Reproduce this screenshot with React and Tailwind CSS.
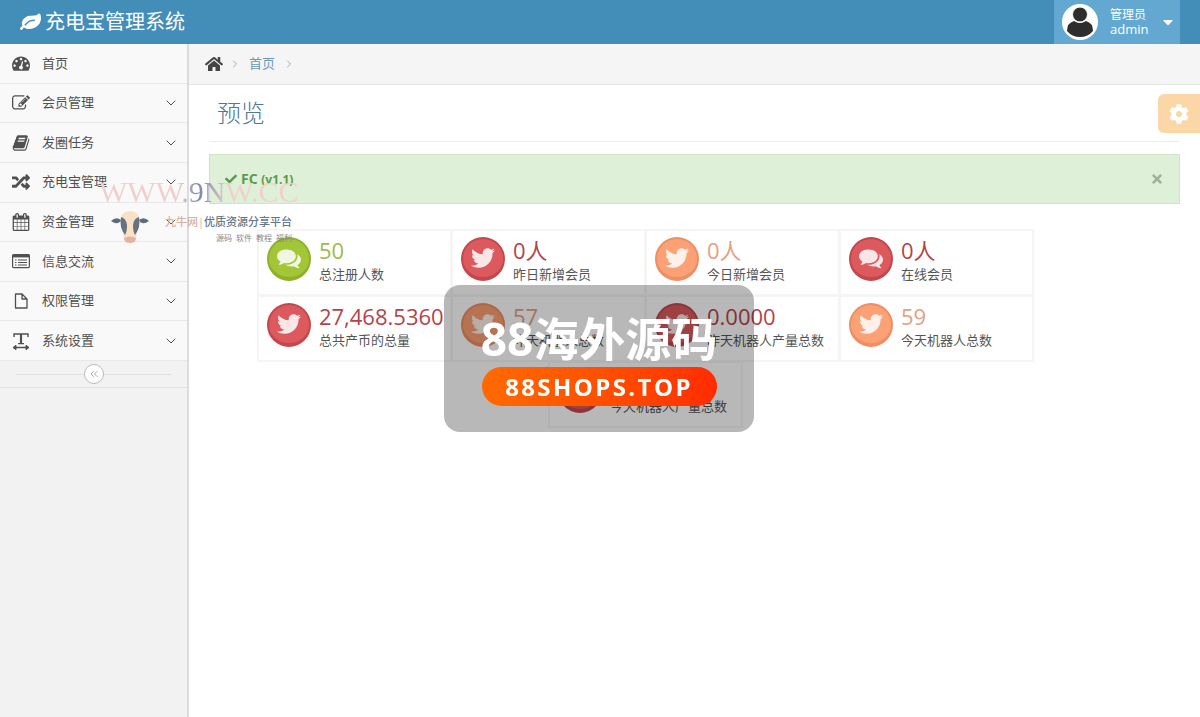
import { FaHome, FaRandom, FaCog, FaCheck, FaTimes, FaTwitter, FaCaretDown } from 'react-icons/fa';
import { ChevronDown, ChevronRight, ChevronsLeft } from 'lucide-react';

function Glyph({ d, className }) {
  return (
    <svg viewBox="0 0 1792 1792" fill="currentColor" className={className} aria-hidden="true">
      <path d={d} />
    </svg>
  );
}

const paths = {
  leaf: 'M1280 704q0-26-19-45t-45-19q-172 0-318 49.5t-259.5 134-235.5 219.5q-19 21-19 45 0 26 19 45t45 19q24 0 45-19 27-24 74-71t67-66q137-124 268.5-176t313.5-52q26 0 45-19t19-45zm512-198q0 95-20 193-46 224-184.5 383t-357.5 268q-214 108-438 108-148 0-286-47-15-5-88-42t-96-37q-16 0-39.5 32t-45 70-52.5 70-60 32q-43 0-63.5-17.5t-45.5-59.5q-2-4-6-11t-5.5-10-3-9.5-1.500-13.500q0-35 31-73.5t68-65.5 68-56 31-48q0-4-14-38t-16-44q-9-51-9-104 0-115 43.5-220t119-184.5 170.5-139 204-95.5q55-18 145-25.5t179.500-9 178.500-6 163.500-24 113.500-56.500l29.500-29.500 29.500-28 27-20 36.500-16 43.500-4.500q39 0 70.500 46t47.500 112 24 124 8 96z',
  dashboard: 'M384 1152q0-53-37.5-90.5t-90.5-37.5-90.5 37.5-37.5 90.5 37.5 90.5 90.5 37.5 90.5-37.5 37.5-90.5zm192-448q0-53-37.5-90.5t-90.5-37.5-90.5 37.5-37.5 90.5 37.5 90.5 90.5 37.5 90.5-37.5 37.5-90.5zm428 481l101-382q6-26-7.5-48.5t-38.5-29.5-48 6.5-30 39.5l-101 382q-60 5-107 43.5t-63 98.5q-20 77 20 146t117 89 146-20 89-117q16-60-6-117t-72-91zm660-33q0-53-37.5-90.5t-90.5-37.5-90.5 37.5-37.5 90.5 37.5 90.5 90.5 37.5 90.5-37.5 37.5-90.5zm-640-640q0-53-37.5-90.5t-90.5-37.5-90.5 37.5-37.5 90.5 37.5 90.5 90.5 37.5 90.5-37.5 37.5-90.5zm448 192q0-53-37.5-90.5t-90.5-37.5-90.5 37.5-37.5 90.5 37.5 90.5 90.5 37.5 90.5-37.5 37.5-90.5zm320 448q0 261-141 483-19 29-54 29h-1402q-35 0-54-29-141-221-141-483 0-182 71-348t191-286 286-191 348-71 348 71 286 191 191 286 71 348z',
  edit: 'M888 1184l116-116-152-152-116 116v56h96v96h56zm440-720q-16-16-33 1l-350 350q-17 17-1 33t33-1l350-350q17-17 1-33zm80 594v190q0 119-84.5 203.5t-203.5 84.5h-832q-119 0-203.5-84.5t-84.5-203.5v-832q0-119 84.5-203.5t203.5-84.5h832q63 0 117 25 15 7 18 23 3 17-9 29l-49 49q-14 14-32 8-23-6-45-6h-832q-66 0-113 47t-47 113v832q0 66 47 113t113 47h832q66 0 113-47t47-113v-126q0-13 9-22l64-64q15-15 35-7t20 29zm-96-738l288 288-672 672h-288v-288zm444 132l-92 92-288-288 92-92q28-28 68-28t68 28l152 152q28 28 28 68t-28 68z',
  book: 'M1703 478q40 57 18 129l-275 906q-19 64-76.5 107.5t-122.5 43.5h-923q-77 0-148.5-53.5t-99.5-131.5q-24-67-2-127 0-4 3-27t4-37q1-8-3-21.5t-3-19.5q2-11 8-21t16.5-23.5 16.5-23.5q23-38 45-91.5t30-91.5q3-10 .5-30t-.5-28q3-11 17-28t17-23q21-36 42-92t25-90q1-9-2.5-32t.5-28q4-13 22-30.5t22-22.5q19-26 42.5-84.5t27.5-96.5q1-8-3-25.5t-2-26.5q2-8 9-18t18-23 17-21q8-12 16.5-30.5t15-35 16-36 19.5-32 26.5-23.5 36-11.5 47.5 5.5l-1 3q38-9 51-9h761q74 0 114 56t18 130l-274 906q-36 119-71.5 153.5t-128.5 34.5h-869q-27 0-38 15-11 16-1 43 24 70 144 70h923q29 0 56-15.5t35-41.5l300-987q7-22 5-57 38 15 59 43zm-1064 2q-4 13 2 22.5t20 9.5h608q13 0 25.5-9.5t16.5-22.5l21-64q4-13-2-22.5t-20-9.5h-608q-13 0-25.5 9.5t-16.5 22.5zm-83 256q-4 13 2 22.5t20 9.5h608q13 0 25.5-9.5t16.5-22.5l21-64q4-13-2-22.5t-20-9.5h-608q-13 0-25.5 9.5t-16.5 22.5z',
  calendar: 'M192 1664h288v-288h-288v288zm352 0h320v-288h-320v288zm-352-352h288v-320h-288v320zm352 0h320v-320h-320v320zm-352-384h288v-288h-288v288zm736 736h320v-288h-320v288zm-384-736h320v-288h-320v288zm768 736h288v-288h-288v288zm-384-352h320v-320h-320v320zm-352-864v-288q0-13-9.5-22.5t-22.5-9.5h-64q-13 0-22.5 9.5t-9.5 22.5v288q0 13 9.5 22.5t22.5 9.5h64q13 0 22.5-9.5t9.5-22.5zm736 864h288v-320h-288v320zm-384-384h320v-288h-320v288zm384 0h288v-288h-288v288zm32-480v-288q0-13-9.5-22.5t-22.5-9.5h-64q-13 0-22.5 9.5t-9.5 22.5v288q0 13 9.5 22.5t22.5 9.5h64q13 0 22.5-9.5t9.5-22.5zm384-64v1280q0 52-38 90t-90 38h-1408q-52 0-90-38t-38-90v-1280q0-52 38-90t90-38h128v-96q0-66 47-113t113-47h64q66 0 113 47t47 113v96h384v-96q0-66 47-113t113-47h64q66 0 113 47t47 113v96h128q52 0 90 38t38 90z',
  comments: 'M1408 768q0 139-94 257t-256.5 186.5-353.5 68.5q-86 0-176-16-124 88-278 128-36 9-86 16h-3q-11 0-20.5-8t-11.5-21q-1-3-1-6.5t.5-6.5 2-6l2.5-5 3.5-5.5 4-5 4.5-5 4-4.5q5-6 23-25t26-29.5 22.5-29 25-38.5 20.5-44q-124-72-195-177t-71-224q0-139 94-257t256.5-186.5 353.5-68.5 353.5 68.5 256.5 186.5 94 257zm384 256q0 120-71 224.5t-195 176.5q10 24 20.5 44t25 38.5 22.5 29 26 29.5 23 25q1 1 4 4.5t4.5 5 4 5 3.5 5.5l2.5 5 2 6 .5 6.5-1 6.5q-3 14-13 22t-22 7q-50-7-86-16-154-40-278-128-90 16-176 16-271 0-472-132 58 4 88 4 161 0 309-45t264-129q125-92 192-212t67-254q0-77-23-152 129 71 204 178t75 230z',
};

const LeafIcon = (props) => <Glyph d={paths.leaf} {...props} />;
const DashboardIcon = (props) => <Glyph d={paths.dashboard} {...props} />;
const EditIcon = (props) => <Glyph d={paths.edit} {...props} />;
const BookIcon = (props) => <Glyph d={paths.book} {...props} />;
const CalendarIcon = (props) => <Glyph d={paths.calendar} {...props} />;
const CommentsIcon = (props) => <Glyph d={paths.comments} {...props} />;

function ListIcon({ className }) {
  return (
    <svg viewBox="0 0 18 18" fill="none" stroke="currentColor" className={className} aria-hidden="true">
      <rect x="0.6" y="2.6" width="16.8" height="13" rx="1" strokeWidth="1.2" />
      <path d="M1 4h16" strokeWidth="2.8" />
      <path d="M3 8h1.500M3 10.500h1.500M3 13h1.500M6 8h9M6 10.500h9M6 13h9" />
    </svg>
  );
}

function FileIcon({ className }) {
  return (
    <svg viewBox="0 0 18 18" fill="none" stroke="currentColor" strokeWidth="1.3" strokeLinejoin="round" className={className} aria-hidden="true">
      <path d="M3.500 2h6.500l5 5v9H3.500zM10 2v5h5" />
    </svg>
  );
}

function TextWidthIcon({ className }) {
  return (
    <svg viewBox="0 0 18 18" fill="none" stroke="currentColor" className={className} aria-hidden="true">
      <path d="M2 5V2h14v3" strokeWidth="1.4" />
      <path d="M9 2v9.500" strokeWidth="2.200" />
      <path d="M6 11.700h6M3 15.500h12" strokeWidth="1.300" />
      <path d="M4 13.300L1 15.500l3 2.200zM14 13.300l3 2.200-3 2.200z" fill="currentColor" />
    </svg>
  );
}

function CowIcon({ className }) {
  return (
    <svg viewBox="0 0 38 34" className={className} aria-hidden="true">
      <path d="M10 8q0-6 9-7 9 1 9 7l-3 20H13z" fill="#f9e1c8" />
      <path d="M0 11q5-5 10-1-3 6-10 1zM38 11q-5-5-10-1 3 6 10 1z" fill="#5d6b7c" />
      <path d="M10 7q5 1 6 8 0 7-2 10-6-8-4-18zM28 7q-5 1-6 8 0 7 2 10 6-8 4-18z" fill="#66727f" />
      <path d="M13 28q6-3 12 0 0 5-6 5t-6-5z" fill="#e8b19f" />
    </svg>
  );
}

const menu = [
  { label: '首页', icon: DashboardIcon },
  { label: '会员管理', icon: EditIcon, sub: true },
  { label: '发圈任务', icon: BookIcon, sub: true },
  { label: '充电宝管理', icon: FaRandom, sub: true },
  { label: '资金管理', icon: CalendarIcon, sub: true },
  { label: '信息交流', icon: ListIcon, sub: true },
  { label: '权限管理', icon: FileIcon, sub: true },
  { label: '系统设置', icon: TextWidthIcon, sub: true },
];

const tones = {
  green: { circle: 'bg-[#a3c637] border-[#8fb02c]', text: 'text-[#9dba4a]' },
  red: { circle: 'bg-[#dc5a5e] border-[#c2484d]', text: 'text-[#b4444a]' },
  orange: { circle: 'bg-[#fca075] border-[#ec8f64]', text: 'text-[#e2a184]' },
};

const stats = [
  { value: '50', label: '总注册人数', tone: 'green', icon: CommentsIcon },
  { value: '0人', label: '昨日新增会员', tone: 'red', icon: FaTwitter },
  { value: '0人', label: '今日新增会员', tone: 'orange', icon: FaTwitter },
  { value: '0人', label: '在线会员', tone: 'red', icon: CommentsIcon },
  { value: '27,468.5360', label: '总共产币的总量', tone: 'red', icon: FaTwitter },
  { value: '57', label: '昨天机器人总数', tone: 'orange', icon: FaTwitter },
  { value: '0.0000', label: '昨天机器人产量总数', tone: 'red', icon: FaTwitter },
  { value: '59', label: '今天机器人总数', tone: 'orange', icon: FaTwitter },
  { value: '0.0000', label: '今天机器人产量总数', tone: 'red', icon: FaTwitter },
];

function Header() {
  return (
    <header className="flex h-[44px] items-stretch justify-between bg-[#438eb9] pr-5 text-white">
      <a href="#" className="flex items-center gap-1 pl-5 text-xl">
        <LeafIcon className="size-[21px]" />
        充电宝管理系统
      </a>
      <button className="flex w-[126px] items-center gap-3 bg-[#62a8d1] pl-2 text-left">
        <svg viewBox="0 0 36 36" className="size-9 shrink-0" aria-hidden="true">
          <circle cx="18" cy="18" r="18" fill="#fff" />
          <path d="M5 27q0-8 7-10 6 4 12 0 7 2 7 10-5 6-13 6T5 27z" fill="#2d2d2d" />
          <circle cx="18" cy="10.500" r="7.500" fill="#2d2d2d" stroke="#fff" />
        </svg>
        <span className="text-[13px] leading-[15px]">
          <small className="block text-xs leading-[15px]">管理员</small>
          admin
        </span>
        <FaCaretDown className="size-4 shrink-0" />
      </button>
    </header>
  );
}

function Sidebar() {
  return (
    <aside className="w-[189px] shrink-0 border-r-2 border-[#dcdcdc] bg-[#f2f2f2]">
      <nav className="grid h-[317px] grid-rows-8">
        {menu.map(({ label, icon: Icon, sub }) => (
          <a
            key={label}
            href="#"
            className="flex items-center border-b border-[#e8e8e8] bg-[#f9f9f9] px-3 text-[13px] text-[#505050]"
          >
            <Icon className="mr-3 size-[18px] shrink-0" />
            <span className="flex-1">{label}</span>
            {sub && <ChevronDown strokeWidth={1.5} className="size-4 -mr-1" />}
          </a>
        ))}
      </nav>
      <div className="flex h-[27px] items-center border-b border-[#e0e0e0] px-4">
        <span className="h-px flex-1 bg-[#e0e0e0]" />
        <button
          aria-label="收起菜单"
          className="flex size-5 items-center justify-center rounded-full border border-[#bbb] bg-white text-[#aaa]"
        >
          <ChevronsLeft className="size-3" />
        </button>
        <span className="h-px flex-1 bg-[#e0e0e0]" />
      </div>
    </aside>
  );
}

function StatBox({ value, label, tone, icon: Icon }) {
  return (
    <div className="-mt-px -ml-px flex h-[67px] w-[195px] gap-2 border-2 border-[#f5f5f5] pt-[6px] pl-2">
      <span
        className={`flex size-11 shrink-0 items-center justify-center rounded-full border-2 border-b-4 text-white/85 ${tones[tone].circle}`}
      >
        <Icon className="size-6" />
      </span>
      <div className="whitespace-nowrap">
        <div className={`text-[22px] leading-[26px] ${tones[tone].text}`}>{value}</div>
        <div className="text-[13px] leading-[22px] text-[#555]">{label}</div>
      </div>
    </div>
  );
}

function SiteMark() {
  return (
    <div className="pointer-events-none absolute top-[174px] left-[99px]">
      <div className="h-9 bg-linear-to-r from-[#efcfcf] from-40% via-[#7d86ad] via-50% to-[#f0d0cc] to-65% bg-clip-text font-['Liberation_Serif',serif] text-[30px] leading-9 text-transparent">
        WWW.9NW.CC
      </div>
      <div className="flex pl-3">
        <CowIcon className="h-[34px] w-[38px]" />
        <div className="flex flex-col items-end pl-4 whitespace-nowrap">
          <p className="text-[11px] leading-[24px] font-medium text-[#66788a]">
            <span className="text-[#d8b0a0]">九牛网|</span>优质资源分享平台
          </p>
          <p className="flex gap-1 text-[8px] leading-[8px] text-[#888]">
            <span>源码</span>
            <span>软件</span>
            <span>教程</span>
            <span>福利</span>
          </p>
        </div>
      </div>
    </div>
  );
}

function ShopMark() {
  return (
    <div className="pointer-events-none fixed inset-0 flex items-center justify-center pr-[2px]">
      <div className="flex h-[147px] w-[310px] flex-col items-center rounded-2xl bg-black/28 pt-6 text-white">
        <div className="flex h-[58px] items-center text-[46px] leading-[58px] font-bold">
          88海外源码
        </div>
        <div className="flex h-[39px] w-[235px] items-center justify-center rounded-full bg-linear-to-r from-[#ff6a00] to-[#ff2a00] text-2xl font-bold tracking-widest">
          88SHOPS.TOP
        </div>
      </div>
    </div>
  );
}

export default function App() {
  return (
    <div className="relative flex min-h-screen flex-col overflow-x-hidden bg-white font-['Open_Sans','Noto_Sans_CJK_SC',sans-serif]">
      <Header />
      <div className="flex flex-1">
        <Sidebar />
        <main className="min-w-0 flex-1">
          <div className="flex h-[41px] items-center border-b border-[#e5e5e5] bg-[#f5f5f5] pl-4 text-[13px] text-[#6b9ab8]">
            <FaHome className="mr-[6px] size-[18px] text-[#444]" />
            <ChevronRight className="mr-2 size-3 text-[#aaa]" />
            <a href="#">首页</a>
            <ChevronRight className="ml-2 size-3 text-[#aaa]" />
          </div>
          <div className="px-5 pt-[10px]">
            <h1 className="mb-3 border-b border-[#ececec] px-2 pb-[10px] text-2xl leading-9 font-light text-[#4d7896]">
              预览
            </h1>
            <div className="flex h-[50px] items-center gap-1 border border-[#cfe6c2] bg-[#dff0d8] px-[15px] text-sm font-bold text-[#5b9a4c]">
              <FaCheck className="size-3" />
              <span>
                FC <small className="text-xs">(v1.1)</small>
              </span>
              <button aria-label="关闭" className="ml-auto text-[#a0b09b]">
                <FaTimes className="size-[14px]" />
              </button>
            </div>
            <div className="mt-[26px] flex w-9/10 flex-wrap justify-center px-12">
              {stats.map((stat) => (
                <StatBox key={stat.label} {...stat} />
              ))}
            </div>
          </div>
        </main>
      </div>
      <button
        aria-label="设置"
        className="absolute top-[94px] right-0 flex h-[39px] w-[42px] items-center justify-center rounded-l-md bg-[#fbd7a8] text-white"
      >
        <FaCog className="size-5" />
      </button>
      <SiteMark />
      <ShopMark />
    </div>
  );
}
